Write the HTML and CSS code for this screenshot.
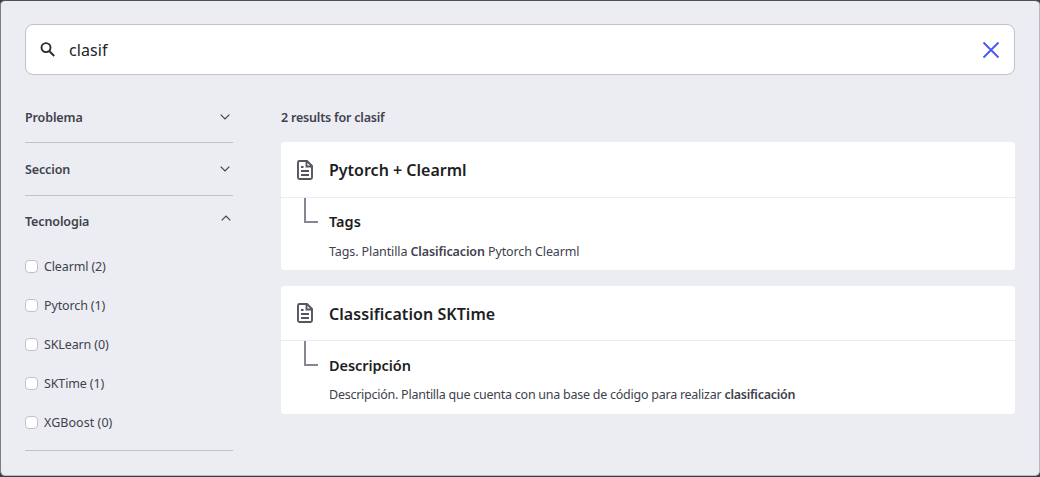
FILE: index.html
```html
<!DOCTYPE html>
<html lang="es">
<head>
<meta charset="utf-8">
<title>Search</title>
<link rel="stylesheet" href="styles.css">
</head>
<body>
<main class="modal">
  <div class="search">
    <svg class="search-icon" width="16" height="16" viewBox="0 0 16 16"><circle cx="6" cy="5.600" r="4.500"/><path d="M9.200 9l5 5"/></svg>
    <span class="query">clasif</span>
    <svg class="clear" width="18" height="18" viewBox="0 0 18 18"><path d="M1.500 1.500l15 15M16.500 1.500l-15 15"/></svg>
  </div>
  <div class="columns">
    <aside class="filters">
      <section class="filter"><h2 class="filter-title">Problema</h2><svg class="chevron" width="10" height="6" viewBox="0 0 10 6"><path d="M.7.7L5 5 9.300.7"/></svg></section>
      <section class="filter"><h2 class="filter-title">Seccion</h2><svg class="chevron" width="10" height="6" viewBox="0 0 10 6"><path d="M.7.7L5 5 9.300.7"/></svg></section>
      <section class="filter filter-open"><h2 class="filter-title">Tecnologia</h2><svg class="chevron chevron-up" width="10" height="6" viewBox="0 0 10 6"><path d="M.7 5.300L5 1 9.300 5.300"/></svg></section>
      <ul class="options">
        <li class="option"><span class="box"></span><span class="option-label">Clearml (2)</span></li>
        <li class="option"><span class="box"></span><span class="option-label">Pytorch (1)</span></li>
        <li class="option"><span class="box"></span><span class="option-label">SKLearn (0)</span></li>
        <li class="option"><span class="box"></span><span class="option-label">SKTime (1)</span></li>
        <li class="option"><span class="box"></span><span class="option-label option-wide">XGBoost (0)</span></li>
      </ul>
    </aside>
    <div class="results">
      <p class="summary">2 results for clasif</p>
      <article class="card">
        <header class="card-head">
          <svg class="doc" width="18" height="20" viewBox="0 0 18 20"><path d="M3.500 1H11l5 5v11.500A1.500 1.500 0 0 1 14.500 19h-11A1.500 1.500 0 0 1 2 17.500v-15A1.500 1.500 0 0 1 3.500 1zM10.500 1v5.500H16M5 7h2.500M5 11h8M5 15h8"/></svg>
          <h3 class="card-title">Pytorch + Clearml</h3>
        </header>
        <div class="card-body">
          <span class="branch"></span>
          <div class="match"><h4 class="match-title">Tags</h4><p class="excerpt">Tags. Plantilla <b>Clasificacion</b> Pytorch Clearml</p></div>
        </div>
      </article>
      <article class="card card-second">
        <header class="card-head">
          <svg class="doc" width="18" height="20" viewBox="0 0 18 20"><path d="M3.500 1H11l5 5v11.500A1.500 1.500 0 0 1 14.500 19h-11A1.500 1.500 0 0 1 2 17.500v-15A1.500 1.500 0 0 1 3.500 1zM10.500 1v5.500H16M5 7h2.500M5 11h8M5 15h8"/></svg>
          <h3 class="card-title">Classification SKTime</h3>
        </header>
        <div class="card-body">
          <span class="branch"></span>
          <div class="match"><h4 class="match-title">Descripción</h4><p class="excerpt">Descripción. Plantilla que cuenta con una base de código para realizar <b>clasificación</b></p></div>
        </div>
      </article>
    </div>
  </div>
</main>
</body>
</html>
```
FILE: styles.css
```css
* { box-sizing: border-box; margin: 0; padding: 0; }
body { background: #3d3e48; font-family: "Noto Sans", sans-serif; color: #40424d; overflow: hidden; }
svg { fill: none; stroke: currentColor; display: block; flex: none; }
.modal { height: 476px; padding: 23px 24px; background: #ecedf3; border: 1px solid #b9bac2; border-top-color: #544e50; border-left-color: #817d78; border-radius: 5px; }
.search { height: 51px; display: flex; align-items: center; padding: 0 14px; background: #fff; border: 1px solid #c1c1c8; border-radius: 8px; }
.search-icon { color: #2b2c35; stroke-width: 1.9; }
.query { margin-left: 13px; font-size: 16px; line-height: 24px; letter-spacing: .1px; color: #23242b; }
.clear { margin-left: auto; color: #4655f5; stroke-width: 1.8; }
.columns { display: flex; gap: 48px; }
.filters { width: 208px; padding-top: 16px; }
.filter { height: 52px; display: flex; align-items: center; justify-content: space-between; padding-right: 3px; border-bottom: 1px solid #c1c1c8; }
.filter + .filter { height: 53px; }
.filter + .filter-open { height: 51px; border: 0; }
.filter-title, .summary { font-size: 12.5px; line-height: 20px; font-weight: 600; letter-spacing: -.12px; }
.filter-title { padding-top: 2px; }
.filter-open .filter-title { padding-top: 1px; }
.summary { letter-spacing: -.2px; }
.chevron { stroke-width: 1.2; }
.chevron-up { margin-bottom: 7px; margin-right: -1px; }
.options { list-style: none; height: 204px; border-bottom: 1px solid #c1c1c8; }
.option { height: 39px; display: flex; align-items: center; }
.box { width: 13px; height: 13px; background: #fff; border: 1px solid #c1c1c8; border-radius: 4px; }
.option-label { margin-left: 6px; font-size: 12.5px; line-height: 20px; letter-spacing: -.13px; }
.option-wide { letter-spacing: .05px; }
.results { flex: 1; padding-top: 33px; }
.summary { height: 34px; }
.card { height: 128px; background: #fff; border-radius: 4px; }
.card-second { margin-top: 16px; }
.card-head { height: 56px; display: flex; align-items: center; padding-left: 15px; border-bottom: 1px solid #ecedf3; }
.card-second .card-head { height: 55px; }
.doc { color: #54565f; stroke-width: 1.9; }
.card-title { margin-left: 15px; font-size: 16px; line-height: 24px; font-weight: 600; color: #1d1e24; }
.card-second .card-title { padding-top: 2px; letter-spacing: .06px; }
.card-body { display: flex; }
.branch { width: 14px; height: 25px; margin-left: 23px; border: solid #858792; border-width: 0 0 2px 2px; }
.match { margin-left: 11px; padding-top: 12px; }
.card-second .match { padding-top: 13px; }
.match-title { font-size: 14.5px; line-height: 22px; font-weight: 600; color: #1d1e24; }
.card-second .match-title { letter-spacing: -.07px; }
.excerpt { margin-top: 10px; font-size: 12.5px; line-height: 20px; letter-spacing: -.11px; }
.card-second .excerpt { margin-top: 9px; letter-spacing: -.25px; }
.excerpt b { font-weight: 600; }
```
